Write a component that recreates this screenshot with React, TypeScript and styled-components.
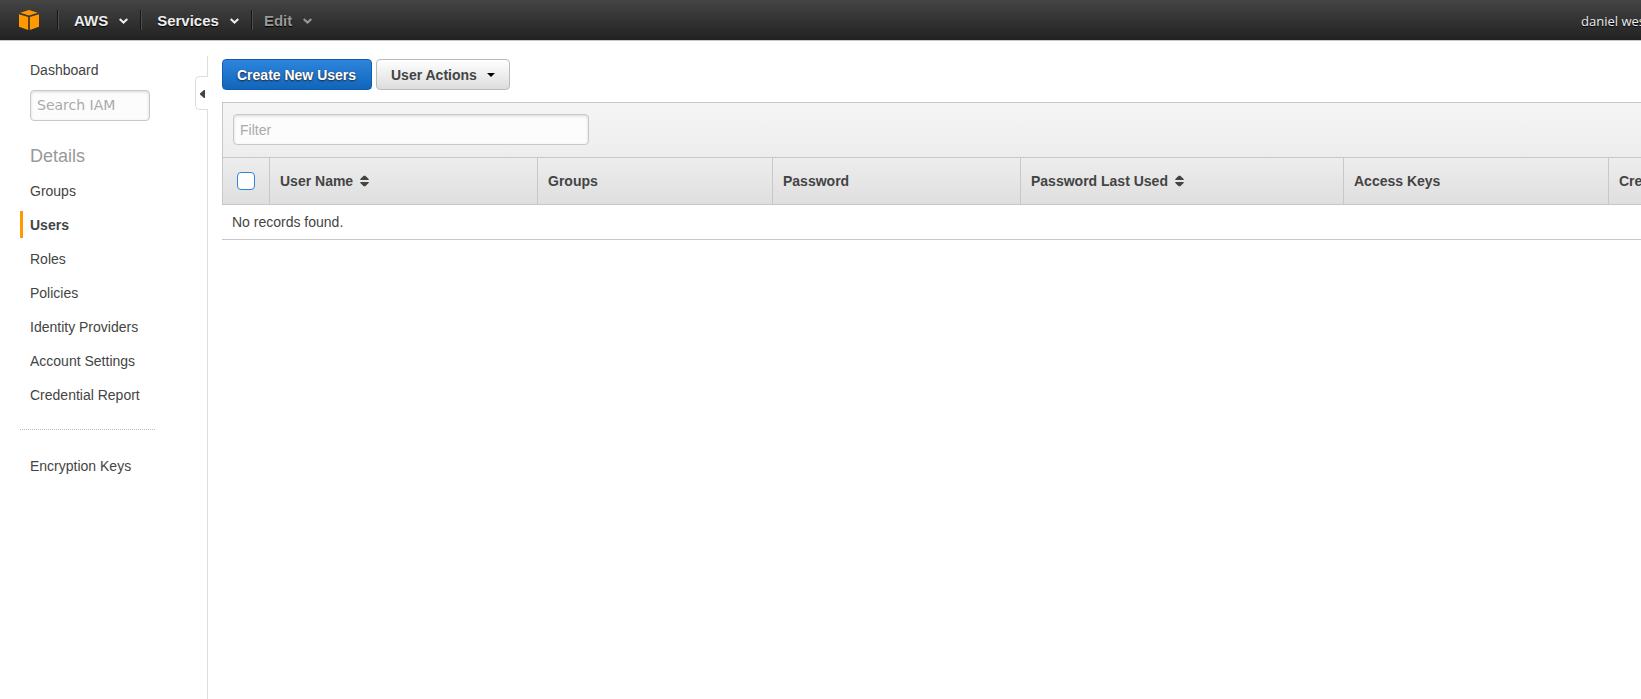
import React from "react";
import styled, { createGlobalStyle, css } from "styled-components";

const GlobalStyle = createGlobalStyle`
  *, *::before, *::after { box-sizing: border-box; }
  body {
    margin: 0;
    background: #fff;
    color: #444;
    font: 14px/20px "Liberation Sans", Arial, sans-serif;
  }
  button, input { font: inherit; }
`;

const Page = styled.div`
  display: flex;
  flex-direction: column;
  min-height: 100vh;
  overflow-x: hidden;
`;

const TopBar = styled.header`
  display: flex;
  align-items: center;
  height: 41px;
  padding-left: 19px;
  border-bottom: 1px solid #c8c8c8;
  background: linear-gradient(#444, #222);
`;

const HomeLink = styled.a`
  display: block;
  width: 20px;
  height: 20px;
  margin-right: 18px;
  svg { display: block; }
`;

const MenuButton = styled.button<{ $muted?: boolean }>`
  display: flex;
  align-items: center;
  gap: 11px;
  height: 20px;
  padding: 2px 12px 0 ${(p) => (p.$muted ? 11 : 15)}px;
  border: 0;
  background: none;
  box-shadow: -1px 0 #4d4d4d, -2px 0 #161616;
  margin-left: 2px;
  color: ${(p) => (p.$muted ? "#999" : "#eee")};
  font-size: 15px;
  font-weight: bold;
  line-height: 20px;
  text-shadow: 0 1px 1px #000;
  white-space: nowrap;
`;

const Account = styled.span`
  width: 60px;
  padding-top: 2px;
  margin-left: auto;
  overflow: hidden;
  color: #eee;
  font: 13px/20px "Open Sans", sans-serif;
  text-shadow: 0 1px 1px #000;
  white-space: nowrap;
`;

const Body = styled.div`
  display: flex;
  flex: 1;
  padding-top: 15px;
`;

const Sidebar = styled.nav`
  flex: none;
  width: 195px;
  padding: 0 40px 0 20px;
`;

const NavList = styled.ul`
  display: flex;
  flex-direction: column;
  gap: 7px;
  margin: 0;
  padding: 0;
  list-style: none;
`;

const NavLink = styled.a<{ $active?: boolean }>`
  display: block;
  padding: 2px 0 0 7px;
  border-left: 3px solid ${(p) => (p.$active ? "#f90" : "transparent")};
  color: #444;
  font-weight: ${(p) => (p.$active ? "bold" : "normal")};
  line-height: 25px;
  text-decoration: none;
  white-space: nowrap;
`;

const NavHeading = styled.h2`
  margin: 23px 0 9px 10px;
  color: #999;
  font-size: 18px;
  font-weight: normal;
  line-height: 24px;
`;

const NavDivider = styled.hr`
  margin: 21px 0 22px;
  border: 0;
  border-top: 1px dotted #bbb;
`;

const fieldStyle = css`
  display: block;
  height: 31px;
  padding: 0 6px;
  border: 1px solid #c8c8c8;
  border-radius: 4px;
  background: #fcfcfc;
  box-shadow: inset 0 1px 3px rgba(0, 0, 0, 0.15);
  color: #444;
  &::placeholder { color: #aaa; opacity: 1; }
`;

const SearchField = styled.input`
  ${fieldStyle}
  width: 120px;
  padding-bottom: 2px;
  margin: 7px 0 0 10px;
  font-family: "DejaVu Sans", sans-serif;
`;

const FilterField = styled.input`
  ${fieldStyle}
  width: 356px;
  max-width: 100%;
`;

const Rail = styled.div`
  display: flex;
  flex: none;
  flex-direction: column;
  width: 13px;
`;

const RailLine = styled.div<{ $fill?: boolean }>`
  flex: ${(p) => (p.$fill ? "1" : "0 0 20px")};
  border-right: 1px solid #ddd;
`;

const CollapseButton = styled.button`
  display: flex;
  align-items: center;
  justify-content: flex-end;
  height: 34px;
  padding: 2px 3px 0 0;
  border: 1px solid #ddd;
  border-right: 0;
  border-radius: 5px 0 0 5px;
  background: #fff;
`;

const Main = styled.main`
  flex: 1;
  min-width: 0;
  padding: 3px 0 0 14px;
  overflow: hidden;
`;

const Toolbar = styled.div`
  display: flex;
  gap: 4px;
  margin-bottom: 12px;
`;

const ActionButton = styled.button<{ $primary?: boolean }>`
  display: flex;
  align-items: center;
  justify-content: space-between;
  min-width: ${(p) => (p.$primary ? 150 : 134)}px;
  height: 31px;
  padding: 0 14px;
  border: 1px solid ${(p) => (p.$primary ? "#0f5cad" : "#bbb")};
  border-radius: 4px;
  background: ${(p) => (p.$primary ? "linear-gradient(#2e85dc, #1166bb)" : "linear-gradient(#fff, #ddd)")};
  color: ${(p) => (p.$primary ? "#fff" : "#444")};
  font-weight: bold;
  text-shadow: ${(p) => (p.$primary ? "0 1px 2px #222" : "none")};
  white-space: nowrap;
`;

const FilterBar = styled.div`
  height: 55px;
  padding: 11px 10px;
  border: solid #c8c8c8;
  border-width: 1px 0 0 1px;
  background: linear-gradient(#f5f5f5, #ededed);
`;

const UserTable = styled.table`
  width: 100%;
  min-width: 1560px;
  border-collapse: separate;
  border-spacing: 0;
  table-layout: fixed;
`;

const HeadCell = styled.th<{ $width?: number }>`
  width: ${(p) => (p.$width ? `${p.$width}px` : "auto")};
  height: 48px;
  padding: 0 10px;
  border: solid #c8c8c8;
  border-width: 1px 0 1px 1px;
  background: linear-gradient(#ededed, #dfdfdf);
  text-align: left;
  white-space: nowrap;
`;

const SelectCell = styled(HeadCell)`
  padding-left: 14px;
`;

const SortButton = styled.button`
  display: flex;
  align-items: center;
  gap: 7px;
  padding: 0;
  border: 0;
  background: none;
  color: inherit;
  font-weight: bold;
`;

const EmptyCell = styled.td`
  height: 35px;
  padding: 0 10px;
  border-bottom: 1px solid #c8c8c8;
`;

const Tick = styled.input`
  display: block;
  appearance: none;
  width: 18px;
  height: 18px;
  margin: 0;
  border: 1px solid #2e85dc;
  border-radius: 4px;
  background: #fff;
  &:checked { background: #2e85dc; }
`;

const Logo = () => (
  <svg width="20" height="20" viewBox="0 0 20 20" fill="#f90" aria-hidden="true">
    <path d="M1.2 2.7 10 0l8.8 2.7L10 5.4z" />
    <path d="M0 4.2 9.2 7v13L0 16.8z" />
    <path d="M20 4.2 10.8 7v13l9.2-3.2z" />
  </svg>
);

const Chevron = () => (
  <svg width="9" height="6" viewBox="0 0 9 6" fill="none" stroke="currentColor" strokeWidth="2" aria-hidden="true">
    <path d="M.7.9 4.5 4.5 8.3.9" />
  </svg>
);

const SortIcon = () => (
  <svg width="9" height="12" viewBox="0 0 9 12" fill="currentColor" aria-hidden="true">
    <path d="M3.7.7h1.6L8.7 4v1H.3V4zM3.7 11.3h1.6L8.7 8V7H.3v1z" />
  </svg>
);

const sections = ["Groups", "Users", "Roles", "Policies", "Identity Providers", "Account Settings", "Credential Report"];

const columns = [
  { label: "User Name", width: 268, sortable: true },
  { label: "Groups", width: 235 },
  { label: "Password", width: 248 },
  { label: "Password Last Used", width: 323, sortable: true },
  { label: "Access Keys", width: 265 },
  { label: "Creation Time" },
];

export default function App() {
  return (
    <>
      <GlobalStyle />
      <Page>
        <TopBar>
          <HomeLink href="#" aria-label="Console home"><Logo /></HomeLink>
          <MenuButton>AWS<Chevron /></MenuButton>
          <MenuButton>Services<Chevron /></MenuButton>
          <MenuButton $muted>Edit<Chevron /></MenuButton>
          <Account>daniel west</Account>
        </TopBar>
        <Body>
          <Sidebar>
            <NavLink href="#">Dashboard</NavLink>
            <SearchField type="text" placeholder="Search IAM" aria-label="Search IAM" />
            <NavHeading>Details</NavHeading>
            <NavList>
              {sections.map((name) => (
                <li key={name}>
                  <NavLink href="#" $active={name === "Users"}>{name}</NavLink>
                </li>
              ))}
            </NavList>
            <NavDivider />
            <NavLink href="#">Encryption Keys</NavLink>
          </Sidebar>
          <Rail>
            <RailLine />
            <CollapseButton aria-label="Collapse sidebar">
              <svg width="5" height="8" viewBox="0 0 5 8" fill="#444" aria-hidden="true">
                <path d="M5 0v8H4L0 4.5v-1L4 0z" />
              </svg>
            </CollapseButton>
            <RailLine $fill />
          </Rail>
          <Main>
            <Toolbar>
              <ActionButton $primary>Create New Users</ActionButton>
              <ActionButton>
                User Actions
                <svg width="8" height="4" viewBox="0 0 8 4" fill="#000" aria-hidden="true">
                  <path d="M0 0h8L4 4z" />
                </svg>
              </ActionButton>
            </Toolbar>
            <FilterBar>
              <FilterField type="text" placeholder="Filter" aria-label="Filter" />
            </FilterBar>
            <UserTable>
              <thead>
                <tr>
                  <SelectCell $width={47}>
                    <Tick type="checkbox" aria-label="Select all users" />
                  </SelectCell>
                  {columns.map((c) => (
                    <HeadCell key={c.label} $width={c.width}>
                      {c.sortable ? <SortButton>{c.label}<SortIcon /></SortButton> : c.label}
                    </HeadCell>
                  ))}
                </tr>
              </thead>
              <tbody>
                <tr>
                  <EmptyCell colSpan={columns.length + 1}>No records found.</EmptyCell>
                </tr>
              </tbody>
            </UserTable>
          </Main>
        </Body>
      </Page>
    </>
  );
}
